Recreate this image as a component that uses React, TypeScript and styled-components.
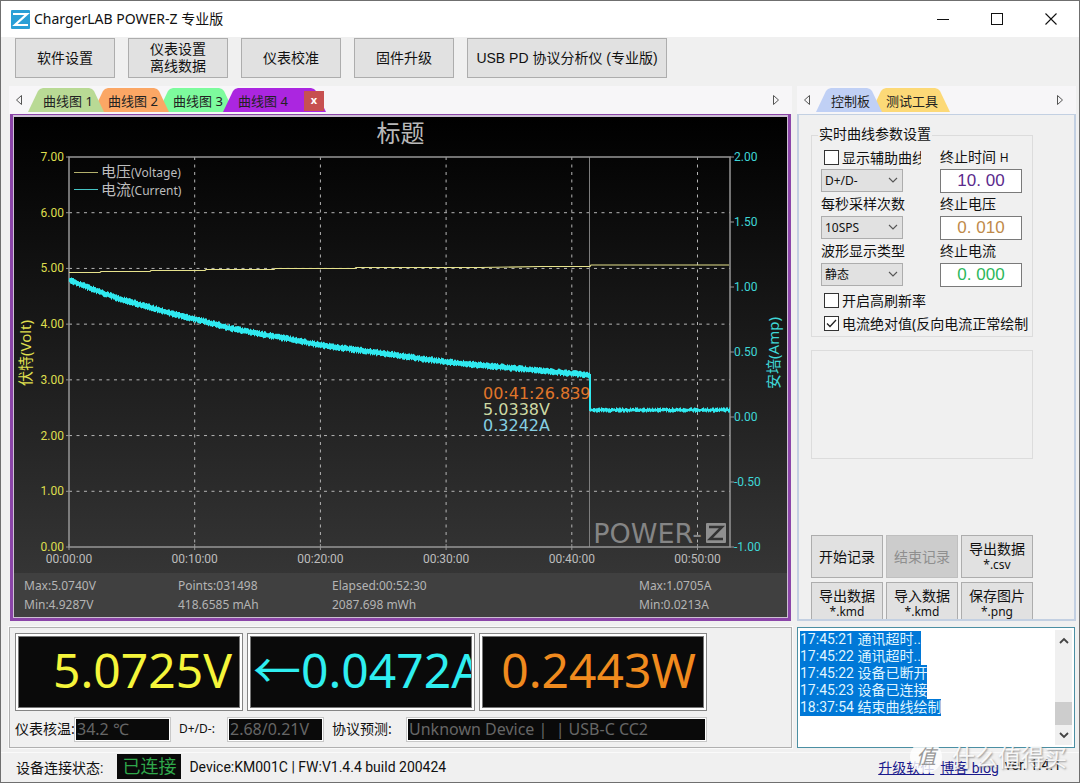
import React from 'react';
import styled, { createGlobalStyle } from 'styled-components';

const sans = `"Noto Sans", "Noto Sans CJK SC", sans-serif`;
const roboto = `Roboto, "Noto Sans CJK SC", sans-serif`;
const arial = `"Liberation Sans", "Noto Sans CJK SC", sans-serif`;

const GlobalStyle = createGlobalStyle`
  * { box-sizing: border-box; }
  body { margin: 0; background: #f0f0f0; color: #111; font-family: ${sans}; font-size: 14px; }
  button, input, select { font-family: inherit; margin: 0; }
`;

const Window = styled.div`
  position: relative;
  border: 1px solid #6f6f6f;
  background: #f0f0f0;
  min-width: 1000px;
`;

const TitleBar = styled.header`
  display: flex;
  align-items: center;
  height: 36px;
  padding: 0 1px 0 10px;
  background: #fff;
`;

const AppName = styled.h1`
  flex: 1;
  margin: 0 0 2px 4px;
  font-size: 14px;
  font-weight: 400;
`;

const WindowButton = styled.button`
  display: flex;
  align-items: center;
  justify-content: center;
  width: 54px;
  height: 36px;
  padding: 0;
  border: 0;
  background: transparent;
`;

const Toolbar = styled.nav`
  display: flex;
  gap: 13px;
  padding: 1px 14px 8px;
`;

const ToolButton = styled.button<{ $wide?: boolean }>`
  width: ${(p) => (p.$wide ? 200 : 100)}px;
  height: 40px;
  padding: 0;
  border: 1px solid #adadad;
  background: #e1e1e1;
  color: #111;
  font-family: ${arial};
  font-size: 14px;
  line-height: 17px;
  white-space: nowrap;
`;

const Workspace = styled.main`
  display: grid;
  grid-template-columns: minmax(0, 1fr) 279px;
  column-gap: 5px;
  padding: 0 3px 4px 8px;
`;

const TabStrip = styled.div`
  display: flex;
  align-items: flex-end;
  height: 28px;
  padding: 0 10px 2px 4px;
  background: #f7f6f8;
`;

const TabList = styled.div`
  display: flex;
  flex: 1;
  margin-left: 3px;
`;

const StripArrow = styled.button`
  display: flex;
  align-items: center;
  justify-content: center;
  width: 12px;
  height: 24px;
  padding: 0 0 1px;
  border: 0;
  background: transparent;
`;

const TabWrap = styled.div<{ $layer: number }>`
  position: relative;
  z-index: ${(p) => p.$layer};
  & + & { margin-left: -11px; }
`;

const TabButton = styled.button<{ $color: string; $width: number }>`
  width: ${(p) => p.$width}px;
  height: 24px;
  padding: 0 0 0 15px;
  border: 0;
  background: ${(p) => p.$color};
  color: #222;
  font-size: 13px;
  text-align: left;
  white-space: nowrap;
  clip-path: polygon(0 100%, 10px 3px, 12px 1px, 15px 0, calc(100% - 15px) 0, calc(100% - 12px) 1px, calc(100% - 10px) 3px, 100% 100%);
`;

const TabClose = styled.button`
  position: absolute;
  right: 2px;
  top: 3px;
  width: 20px;
  height: 20px;
  padding: 0 0 2px;
  border: 0;
  background: #c75050;
  color: #fff;
  font-size: 11px;
  font-weight: 700;
  line-height: 16px;
`;

const ChartFrame = styled.section`
  margin: 0 1px;
  border: solid #8b45a8;
  border-width: 1px 3px 3px;
`;

const ChartBody = styled.div`
  border: solid #cdbfd4;
  border-width: 2px 1px 1px;
  background: linear-gradient(#000, #3a3a3a);
`;

const ChartTitle = styled.h2`
  margin: 0;
  color: #b9b9b9;
  font-size: 24px;
  font-weight: 400;
  line-height: 32px;
  text-align: center;
`;

const ChartSvg = styled.svg`
  display: block;
  width: 100%;
  height: auto;
`;

const Stats = styled.div`
  display: grid;
  grid-template-columns: 154fr 154fr 307fr 148fr;
  padding: 3px 0 3px 10px;
  background: #404040;
  color: #b4b4b4;
  font-size: 12px;
  line-height: 19px;
`;

const ControlPanel = styled.section`
  border: 2px solid #c3d0e2;
  border-top-width: 1px;
  padding: 12px 41px 0 12px;
  overflow: hidden;
`;

const Group = styled.fieldset`
  min-width: 0;
  height: 210px;
  margin: 0;
  padding: 3px 0 0 9px;
  border: 1px solid #dcdcdc;
`;

const GroupTitle = styled.legend`
  height: 16px;
  margin-left: -3px;
  padding: 0 1px;
  font-size: 14px;
  line-height: 14px;
`;

const BlankGroup = styled.div`
  height: 109px;
  margin-top: 13px;
  border: 1px solid #dcdcdc;
`;

const Fields = styled.div`
  display: grid;
  grid-template-columns: 119px 82px;
  grid-auto-rows: 47px;
  margin-bottom: 2px;
`;

const Field = styled.div`
  display: flex;
  flex-direction: column;
`;

const FieldLabel = styled.label`
  height: 23px;
  font-size: 14px;
  line-height: 22px;
  white-space: nowrap;
  & small { font-size: 12px; }
`;

const CheckLabel = styled.label<{ $clip?: boolean }>`
  display: flex;
  align-items: center;
  gap: 3px;
  height: 23px;
  padding-left: 3px;
  width: ${(p) => (p.$clip ? '100px' : 'auto')};
  overflow: hidden;
  font-size: 14px;
  line-height: 22px;
  white-space: nowrap;
`;

const CheckBox = styled.input`
  flex: none;
  appearance: none;
  width: 15px;
  height: 15px;
  border: 1px solid #333;
  background: #fff;
  &:checked {
    background: #fff url("data:image/svg+xml,%3Csvg xmlns='http://www.w3.org/2000/svg' viewBox='0 0 13 13'%3E%3Cpath d='M2 6.5 5 9.500 11 3' fill='none' stroke='%23222' stroke-width='1.3'/%3E%3C/svg%3E");
  }
`;

const SelectWrap = styled.div`
  position: relative;
  width: 82px;
  & svg { position: absolute; right: 5px; top: 8px; pointer-events: none; }
`;

const Select = styled.select`
  appearance: none;
  display: block;
  width: 82px;
  height: 23px;
  padding: 0 3px;
  border: 1px solid #adadad;
  border-radius: 0;
  background: #e1e1e1;
  color: #111;
  font-size: 12px;
`;

const NumberBox = styled.input<{ $color: string }>`
  width: 82px;
  height: 24px;
  padding: 0;
  border: 1px solid #7a7a7a;
  background: #fff;
  color: ${(p) => p.$color};
  font-family: ${arial};
  font-size: 17px;
  text-align: center;
`;

const Actions = styled.div`
  display: grid;
  grid-template-columns: repeat(3, 1fr);
  gap: 4px 3px;
  margin: 76px 0 -6px;
`;

const ActionButton = styled.button`
  height: 43px;
  padding: 0;
  border: 1px solid #adadad;
  background: #e1e1e1;
  color: #111;
  font-size: 14px;
  line-height: 16px;
  white-space: nowrap;
  & small { display: block; font-size: 12px; line-height: 15px; }
  &:disabled { background: #ccc; border-color: #bfbfbf; color: #8f8f8f; }
`;

const MeterPanel = styled.section`
  margin-top: 6px;
  padding: 5px;
  border: 1px solid #b0b0b0;
  outline: 1px solid #fafafa;
`;

const Readouts = styled.div`
  display: flex;
  gap: 4px;
`;

const Readout = styled.div`
  width: 228px;
  height: 78px;
  padding: 2px;
  border: 1px solid #858585;
  background: #fff;
`;

const ReadoutValue = styled.output<{ $color: string; $left?: boolean }>`
  display: flex;
  align-items: center;
  justify-content: ${(p) => (p.$left ? 'flex-start' : 'flex-end')};
  height: 72px;
  padding: 0 ${(p) => (p.$left ? 0 : 7)}px 5px 2px;
  border: 1px solid #777;
  background: #0a0a0a;
  color: ${(p) => p.$color};
  font-size: 48px;
  line-height: 64px;
  white-space: nowrap;
  overflow: hidden;
`;

const InfoRow = styled.div`
  display: flex;
  align-items: center;
  margin-top: 6px;
`;

const InfoLabel = styled.label<{ $width: number; $small?: boolean }>`
  width: ${(p) => p.$width}px;
  padding-bottom: 2px;
  font-size: ${(p) => (p.$small ? 12 : 14)}px;
  line-height: 20px;
  white-space: nowrap;
`;

const InfoBox = styled.input<{ $width: number }>`
  width: ${(p) => p.$width}px;
  height: 25px;
  margin-right: 8px;
  padding: 0 2px 2px;
  border: 1px solid #c8c8c8;
  outline: 1px solid #fff;
  outline-offset: -2px;
  background: #0a0a0a;
  color: #666;
  font-size: 16px;
`;

const LogPanel = styled.section`
  display: flex;
  justify-content: space-between;
  margin: 6px 1px 0 0;
  padding: 2px;
  border: 1px solid #4b8fa3;
  background: #fff;
`;

const LogLines = styled.ol`
  margin: 1px 0 0;
  padding: 0;
  list-style: none;
  font-family: ${roboto};
  font-size: 14px;
`;

const LogLine = styled.li`
  width: max-content;
  height: 17px;
  background: #0078d7;
  color: #dff4ff;
  line-height: 17px;
`;

const ScrollBar = styled.div`
  display: flex;
  flex-direction: column;
  width: 17px;
  background: #f0f0f0;
`;

const ScrollButton = styled.button`
  display: flex;
  align-items: center;
  justify-content: center;
  height: 20px;
  padding: 0;
  border: 0;
  background: transparent;
`;

const ScrollThumb = styled.div`
  height: 23px;
  margin-top: auto;
  background: #cdcdcd;
`;

const StatusBar = styled.footer`
  display: flex;
  align-items: center;
  height: 30px;
  padding: 0 18px 2px 15px;
  border-top: 1px solid #fafafa;
  font-family: ${roboto};
  font-size: 14px;
`;

const StatusBadge = styled.span`
  margin: 0 8px 0 14px;
  padding: 0 5px;
  background: #0a0a0a;
  color: #2fa84a;
  font-size: 18px;
  line-height: 25px;
`;

const StatusLinks = styled.span`
  display: flex;
  gap: 6px;
  margin-left: auto;
  & a { color: #1a1a8c; }
`;

const Watermark = styled.div`
  position: absolute;
  right: 12px;
  bottom: 9px;
  display: flex;
  align-items: center;
  gap: 10px;
  color: rgba(255, 255, 255, 0.9);
  font-size: 23px;
  line-height: 32px;
  text-shadow: 1px 1px 2px rgba(120, 120, 120, 0.8);
  pointer-events: none;
`;

const WatermarkSeal = styled.span`
  width: 32px;
  height: 32px;
  border-radius: 50%;
  background: rgba(255, 255, 255, 0.8);
  color: #999;
  font-size: 20px;
  font-style: italic;
  line-height: 32px;
  text-align: center;
  text-shadow: none;
`;

const Arrow = ({ dir }: { dir: 'left' | 'right' }) => (
  <svg width="8" height="12" viewBox="0 0 8 12">
    <path d={dir === 'left' ? 'M6.500 1.500v9L1.500 6z' : 'M1.500 1.500v9L6.500 6z'} fill="none" stroke="#555" />
  </svg>
);

const Chevron = () => (
  <svg width="10" height="7" viewBox="0 0 10 7">
    <path d="M1 1l4 4 4-4" fill="none" stroke="#555" strokeWidth="1.1" />
  </svg>
);

interface TabInfo { label: string; color: string; width?: number; closable?: boolean }

const Tabs = ({ tabs }: { tabs: TabInfo[] }) => (
  <TabStrip>
    <StripArrow aria-label="向左"><Arrow dir="left" /></StripArrow>
    <TabList role="tablist">
      {tabs.map((t, i) => (
        <TabWrap key={t.label} $layer={t.closable ? 9 : 8 - i}>
          <TabButton role="tab" $color={t.color} $width={t.width ?? 76}>{t.label}</TabButton>
          {t.closable && <TabClose aria-label="关闭">x</TabClose>}
        </TabWrap>
      ))}
    </TabList>
    <StripArrow aria-label="向右"><Arrow dir="right" /></StripArrow>
  </TabStrip>
);

const LEFT = 69, RIGHT = 730, TOP = 157, BOTTOM = 547;
const timeX = (i: number) => LEFT + i * 125.7;
const voltY = (v: number) => BOTTOM - (v * (BOTTOM - TOP)) / 7;
const ampY = (a: number) => TOP + (2 - a) * 130;

const currentPoints: [number, number][] = [
  [69, 280], [82, 285], [95, 290], [120, 299], [145, 306], [170, 313], [195, 319], [230, 328], [260, 334],
  [290, 339], [320, 345], [350, 349], [380, 353], [446, 362], [500, 367], [545, 371], [590, 375],
];

const currentAt = (x: number) => {
  if (x > 590) return 410;
  const i = Math.max(1, currentPoints.findIndex((p) => p[0] >= x));
  const [x0, y0] = currentPoints[i - 1];
  const [x1, y1] = currentPoints[i];
  return y0 + ((y1 - y0) * (x - x0)) / (x1 - x0);
};

const noise = (n: number) => {
  const s = Math.sin(n * 127.1) * 43758.5453;
  return s - Math.floor(s);
};

const ripple = Array.from({ length: RIGHT - LEFT }, (_, i) => {
  const x = LEFT + i + 0.5;
  const y = currentAt(x);
  const base = x > 590 ? 1 : 2;
  return `M${x} ${(y - base - noise(i) * 1.8).toFixed(1)}V${(y + base + noise(i + 999) * 1.8).toFixed(1)}`;
}).join('');

const currentLine = currentPoints.map((p) => p.join(',')).join(' ') + ' 590,410 729,410';
const voltageLine =
  '69,272.5 100,272.5 101,271.5 150,271.500 151,270.5 205,270.5 206,269.5 274,269.5 275,268.5 355,268.5 356,267.5 480,267.5 540,266.5 590,266.500 591,265 729,265';

const Chart = () => (
  <ChartSvg viewBox="14 149 773 424" role="img" aria-label="电压电流曲线">
    <g stroke="#b5b5b5" strokeDasharray="3 4.500">
      {[1, 2, 3, 4, 5, 6].map((v) => <line key={v} x1={LEFT} x2={RIGHT} y1={voltY(v)} y2={voltY(v)} />)}
      {[1, 2, 3, 4, 5].map((t) => <line key={t} x1={timeX(t)} x2={timeX(t)} y1={TOP} y2={BOTTOM} />)}
    </g>
    <g stroke="#969696">
      {[0, 1, 2, 3, 4, 5, 6, 7].map((v) => <line key={v} x1={LEFT - 3} x2={LEFT} y1={voltY(v)} y2={voltY(v)} />)}
      {[0, 1, 2, 3, 4, 5, 6].map((a) => <line key={a} x1={RIGHT} x2={RIGHT + 4} y1={TOP + a * 65} y2={TOP + a * 65} />)}
      {[0, 1, 2, 3, 4, 5].map((t) => <line key={t} x1={timeX(t)} x2={timeX(t)} y1={BOTTOM - 3} y2={BOTTOM + 3} />)}
      <line x1="589.5" x2="589.5" y1={TOP} y2={BOTTOM} stroke="#7d7d7d" />
    </g>
    <rect x={LEFT} y={TOP} width={RIGHT - LEFT} height={BOTTOM - TOP} fill="none" stroke="#969696" strokeWidth="1.5" />

    <text x="702" y="543" textAnchor="end" fontFamily="DejaVu Sans" fontSize="27" fill="#858585">POWER-</text>
    <rect x="706" y="523" width="20" height="20" rx="1" fill="#8f8f8f" />
    <path d="M709 527h13l-12 12h13" fill="none" stroke="#333" strokeWidth="2.500" />

    <polyline points={voltageLine} fill="none" stroke="#e6e28c" strokeWidth="1.2" />
    <polyline points={currentLine} fill="none" stroke="#2fe9ef" strokeWidth="2" />
    <path d={ripple} stroke="#2fe9ef" />

    <g fontFamily="Roboto" fontSize="12">
      <g fill="#dede4e" textAnchor="end">
        {[0, 1, 2, 3, 4, 5, 6, 7].map((v) => <text key={v} x="64" y={voltY(v) + 4}>{v.toFixed(2)}</text>)}
      </g>
      <g fill="#3fd6d6">
        {[2, 1.5, 1, 0.5, 0, -0.5, -1].map((a) => <text key={a} x="734" y={ampY(a) + 4}>{a.toFixed(2)}</text>)}
      </g>
      <g fill="#bdbdbd" textAnchor="middle">
        {[0, 1, 2, 3, 4, 5].map((t) => <text key={t} x={timeX(t)} y="563">{`00:${t}0:00`}</text>)}
      </g>
    </g>

    <g fontFamily='"Noto Sans", "Noto Sans CJK SC", sans-serif' fontSize="15">
      <text transform="translate(31 353) rotate(-90)" textAnchor="middle" fill="#dede4e">伏特(Volt)</text>
      <text transform="translate(779 353) rotate(-90)" textAnchor="middle" fill="#3fd6d6">安培(Amp)</text>
      <g fill="#bdbdbd">
        <text x="101" y="177">电压<tspan fontSize="12">(Voltage)</tspan></text>
        <text x="101" y="195">电流<tspan fontSize="12">(Current)</tspan></text>
      </g>
    </g>
    <line x1="74" x2="98" y1="172.5" y2="172.5" stroke="#b3b06c" />
    <line x1="74" x2="98" y1="189.5" y2="189.5" stroke="#46c4c4" />

    <g fontFamily="DejaVu Sans" fontSize="16">
      <text x="483" y="399" fill="#e0762a">00:41:26.839</text>
      <text x="483" y="415" fill="#cdd9a4">5.0338V</text>
      <text x="483" y="431" fill="#86cfe2">0.3242A</text>
    </g>
  </ChartSvg>
);

const SelectField = ({ id, value }: { id: string; value: string }) => (
  <SelectWrap>
    <Select id={id} defaultValue={value} aria-label={value}><option>{value}</option></Select>
    <Chevron />
  </SelectWrap>
);

const logLines = [
  '17:45:21 通讯超时..', '17:45:22 通讯超时..', '17:45:22 设备已断开', '17:45:23 设备已连接', '18:37:54 结束曲线绘制',
];

export default function App() {
  return (
    <>
      <GlobalStyle />
      <Window>
        <TitleBar>
          <svg width="19" height="19" viewBox="0 0 19 19">
            <rect width="19" height="19" rx="1" fill="#2a9fd6" />
            <path d="M2 4h14L4 15h13" fill="none" stroke="#fff" strokeWidth="2.200" />
          </svg>
          <AppName>ChargerLAB POWER-Z 专业版</AppName>
          <WindowButton aria-label="最小化">
            <svg width="12" height="12" viewBox="0 0 12 12"><path d="M0 6.500h12" stroke="#111" /></svg>
          </WindowButton>
          <WindowButton aria-label="最大化">
            <svg width="12" height="12" viewBox="0 0 12 12"><rect x=".5" y=".5" width="11" height="11" fill="none" stroke="#111" /></svg>
          </WindowButton>
          <WindowButton aria-label="关闭窗口">
            <svg width="12" height="12" viewBox="0 0 12 12"><path d="M.5.500l11 11M11.500.500l-11 11" stroke="#111" strokeWidth="1.100" /></svg>
          </WindowButton>
        </TitleBar>

        <Toolbar>
          <ToolButton>软件设置</ToolButton>
          <ToolButton>仪表设置<br />离线数据</ToolButton>
          <ToolButton>仪表校准</ToolButton>
          <ToolButton>固件升级</ToolButton>
          <ToolButton $wide>USB PD 协议分析仪 (专业版)</ToolButton>
        </Toolbar>

        <Workspace>
          <Tabs
            tabs={[
              { label: '曲线图 1', color: '#b9da95' },
              { label: '曲线图 2', color: '#fba765' },
              { label: '曲线图 3', color: '#7dfb9d' },
              { label: '曲线图 4', color: '#ab26e0', width: 103, closable: true },
            ]}
          />
          <Tabs
            tabs={[
              { label: '控制板', color: '#c0d0f5', width: 66 },
              { label: '测试工具', color: '#fcd977', width: 79 },
            ]}
          />

          <ChartFrame>
            <ChartBody>
              <ChartTitle>标题</ChartTitle>
              <Chart />
              <Stats>
                <div>Max:5.0740V<br />Min:4.9287V</div>
                <div>Points:031498<br />418.6585 mAh</div>
                <div>Elapsed:00:52:30<br />2087.698 mWh</div>
                <div>Max:1.0705A<br />Min:0.0213A</div>
              </Stats>
            </ChartBody>
          </ChartFrame>

          <ControlPanel>
            <Group>
              <GroupTitle>实时曲线参数设置</GroupTitle>
              <Fields>
                <Field>
                  <CheckLabel $clip><CheckBox type="checkbox" />显示辅助曲线</CheckLabel>
                  <SelectField id="aux" value="D+/D-" />
                </Field>
                <Field>
                  <FieldLabel htmlFor="end-time">终止时间 <small>H</small></FieldLabel>
                  <NumberBox id="end-time" $color="#5b2a8c" defaultValue="10. 00" />
                </Field>
                <Field>
                  <FieldLabel htmlFor="rate">每秒采样次数</FieldLabel>
                  <SelectField id="rate" value="10SPS" />
                </Field>
                <Field>
                  <FieldLabel htmlFor="end-volt">终止电压</FieldLabel>
                  <NumberBox id="end-volt" $color="#c08a4a" defaultValue="0. 010" />
                </Field>
                <Field>
                  <FieldLabel htmlFor="wave">波形显示类型</FieldLabel>
                  <SelectField id="wave" value="静态" />
                </Field>
                <Field>
                  <FieldLabel htmlFor="end-amp">终止电流</FieldLabel>
                  <NumberBox id="end-amp" $color="#2cb85c" defaultValue="0. 000" />
                </Field>
              </Fields>
              <CheckLabel><CheckBox type="checkbox" />开启高刷新率</CheckLabel>
              <CheckLabel><CheckBox type="checkbox" defaultChecked />电流绝对值(反向电流正常绘制</CheckLabel>
            </Group>
            <BlankGroup />
            <Actions>
              <ActionButton>开始记录</ActionButton>
              <ActionButton disabled>结束记录</ActionButton>
              <ActionButton>导出数据<small>*.csv</small></ActionButton>
              <ActionButton>导出数据<small>*.kmd</small></ActionButton>
              <ActionButton>导入数据<small>*.kmd</small></ActionButton>
              <ActionButton>保存图片<small>*.png</small></ActionButton>
            </Actions>
          </ControlPanel>

          <MeterPanel>
            <Readouts>
              <Readout><ReadoutValue $color="#f5f53a">5.0725V</ReadoutValue></Readout>
              <Readout><ReadoutValue $color="#2feef0" $left>←0.0472A</ReadoutValue></Readout>
              <Readout><ReadoutValue $color="#f08a1e">0.2443W</ReadoutValue></Readout>
            </Readouts>
            <InfoRow>
              <InfoLabel htmlFor="temp" $width={59}>仪表核温:</InfoLabel>
              <InfoBox id="temp" $width={97} readOnly value="34.2 ℃" />
              <InfoLabel htmlFor="dpdm" $width={48} $small>D+/D-:</InfoLabel>
              <InfoBox id="dpdm" $width={97} readOnly value="2.68/0.21V" />
              <InfoLabel htmlFor="proto" $width={74}>协议预测:</InfoLabel>
              <InfoBox id="proto" $width={301} readOnly value="Unknown Device |  | USB-C CC2" />
            </InfoRow>
          </MeterPanel>

          <LogPanel>
            <LogLines>{logLines.map((l) => <LogLine key={l}>{l}</LogLine>)}</LogLines>
            <ScrollBar>
              <ScrollButton aria-label="向上滚动">
                <svg width="10" height="7" viewBox="0 0 10 7"><path d="M1 6l4-4 4 4" fill="none" stroke="#444" strokeWidth="1.800" /></svg>
              </ScrollButton>
              <ScrollThumb />
              <ScrollButton aria-label="向下滚动">
                <svg width="10" height="7" viewBox="0 0 10 7"><path d="M1 1l4 4 4-4" fill="none" stroke="#444" strokeWidth="1.800" /></svg>
              </ScrollButton>
            </ScrollBar>
          </LogPanel>
        </Workspace>

        <StatusBar>
          <span>设备连接状态:</span>
          <StatusBadge>已连接</StatusBadge>
          <span>Device:KM001C | FW:V1.4.4 build 200424</span>
          <StatusLinks>
            <a href="#upgrade">升级软件</a>
            <a href="#blog">博客 blog</a>
            <span>ver. 1.4.1</span>
          </StatusLinks>
        </StatusBar>

        <Watermark>
          <WatermarkSeal>值</WatermarkSeal>
          <span>什么值得买</span>
        </Watermark>
      </Window>
    </>
  );
}
